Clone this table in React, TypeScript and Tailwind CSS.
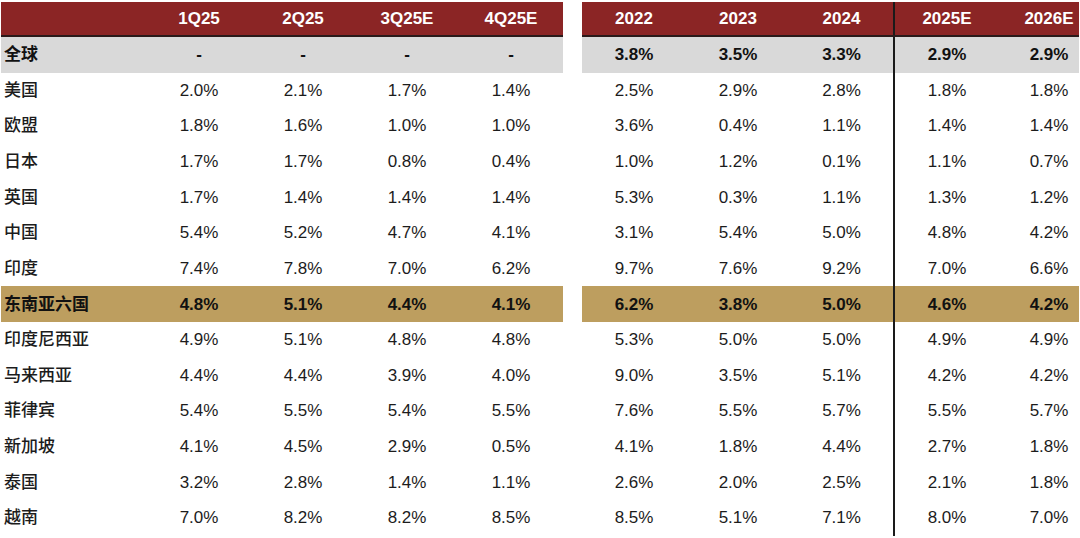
import React from "react";

type Row = { name: string; q: string[]; y: string[]; kind?: "gray" | "gold" };

const rows: Row[] = [
  { name: "全球", q: ["-", "-", "-", "-"], y: ["3.8%", "3.5%", "3.3%", "2.9%", "2.9%"], kind: "gray" },
  { name: "美国", q: ["2.0%", "2.1%", "1.7%", "1.4%"], y: ["2.5%", "2.9%", "2.8%", "1.8%", "1.8%"] },
  { name: "欧盟", q: ["1.8%", "1.6%", "1.0%", "1.0%"], y: ["3.6%", "0.4%", "1.1%", "1.4%", "1.4%"] },
  { name: "日本", q: ["1.7%", "1.7%", "0.8%", "0.4%"], y: ["1.0%", "1.2%", "0.1%", "1.1%", "0.7%"] },
  { name: "英国", q: ["1.7%", "1.4%", "1.4%", "1.4%"], y: ["5.3%", "0.3%", "1.1%", "1.3%", "1.2%"] },
  { name: "中国", q: ["5.4%", "5.2%", "4.7%", "4.1%"], y: ["3.1%", "5.4%", "5.0%", "4.8%", "4.2%"] },
  { name: "印度", q: ["7.4%", "7.8%", "7.0%", "6.2%"], y: ["9.7%", "7.6%", "9.2%", "7.0%", "6.6%"] },
  { name: "东南亚六国", q: ["4.8%", "5.1%", "4.4%", "4.1%"], y: ["6.2%", "3.8%", "5.0%", "4.6%", "4.2%"], kind: "gold" },
  { name: "印度尼西亚", q: ["4.9%", "5.1%", "4.8%", "4.8%"], y: ["5.3%", "5.0%", "5.0%", "4.9%", "4.9%"] },
  { name: "马来西亚", q: ["4.4%", "4.4%", "3.9%", "4.0%"], y: ["9.0%", "3.5%", "5.1%", "4.2%", "4.2%"] },
  { name: "菲律宾", q: ["5.4%", "5.5%", "5.4%", "5.5%"], y: ["7.6%", "5.5%", "5.7%", "5.5%", "5.7%"] },
  { name: "新加坡", q: ["4.1%", "4.5%", "2.9%", "0.5%"], y: ["4.1%", "1.8%", "4.4%", "2.7%", "1.8%"] },
  { name: "泰国", q: ["3.2%", "2.8%", "1.4%", "1.1%"], y: ["2.6%", "2.0%", "2.5%", "2.1%", "1.8%"] },
  { name: "越南", q: ["7.0%", "8.2%", "8.2%", "8.5%"], y: ["8.5%", "5.1%", "7.1%", "8.0%", "7.0%"] },
];

const qHead = ["1Q25", "2Q25", "3Q25E", "4Q25E"];
const yHead = ["2022", "2023", "2024", "2025E", "2026E"];

function YCells({ vals, h }: { vals: string[]; h: string }) {
  return (
    <>
      <div className={`w-[104px] ${h} flex items-center justify-center`}>{vals[0]}</div>
      <div className={`w-[104px] ${h} flex items-center justify-center`}>{vals[1]}</div>
      <div className={`w-[103px] ${h} flex items-center justify-center`}>{vals[2]}</div>
      <div className={`w-[106px] ${h} flex items-center justify-center border-l-2 border-[#1a1a1a]`}>{vals[3]}</div>
      <div className={`w-[80px] ${h} flex items-center justify-center pl-[20px]`}>{vals[4]}</div>
    </>
  );
}

export default function App() {
  return (
    <div
      className="w-[1080px] h-[538px] bg-white overflow-hidden pt-[2px] text-[17px] text-[#1c1c1c]"
      style={{ fontFamily: '"Liberation Sans", "Noto Sans CJK SC", Arial, sans-serif' }}
    >
      {/* header */}
      <div className="flex pl-[1px]">
        <div className="flex w-[562px] h-[35px] bg-[#8b2525] border-b-2 border-[#2a1a1a] text-white font-bold">
          <div className="w-[146px]" />
          {qHead.map((h) => (
            <div key={h} className="w-[104px] flex items-center justify-center">
              {h}
            </div>
          ))}
        </div>
        <div className="w-[19px]" />
        <div className="flex w-[497px] bg-[#8b2525] border-b-2 border-[#2a1a1a] text-white font-bold">
          <YCells vals={yHead} h="h-[33px]" />
        </div>
      </div>
      {rows.map((r) => {
        const bg = r.kind === "gray" ? "bg-[#d9d9d9]" : r.kind === "gold" ? "bg-[#bd9e5f]" : "bg-white";
        const weight = r.kind ? "font-bold text-[#111]" : "";
        return (
          <div key={r.name} className={`flex pl-[1px] ${weight}`}>
            <div className={`flex w-[562px] h-[35.65px] ${bg}`}>
              <div className={`w-[146px] flex items-center pl-[3px] ${r.kind ? "" : "font-medium"}`}>{r.name}</div>
              {r.q.map((v, i) => (
                <div key={i} className="w-[104px] flex items-center justify-center">
                  {v}
                </div>
              ))}
            </div>
            <div className="w-[19px]" />
            <div className={`flex w-[497px] ${bg}`}>
              <YCells vals={r.y} h="h-[35.65px]" />
            </div>
          </div>
        );
      })}
    </div>
  );
}
